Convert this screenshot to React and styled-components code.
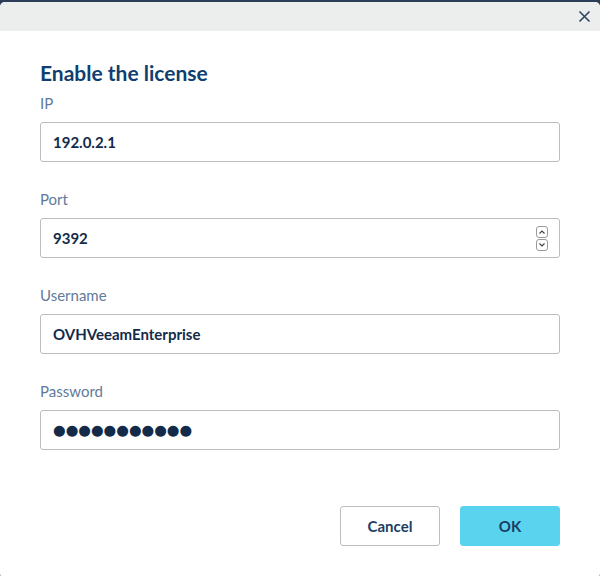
import React from 'react';
import styled, { createGlobalStyle } from 'styled-components';

const GlobalStyle = createGlobalStyle`
  html, body {
    margin: 0;
    padding: 0;
    background: linear-gradient(#2b3d58, #9aa3b4);
    overflow: hidden;
  }
  * { box-sizing: border-box; }
`;

const Dialog = styled.div`
  width: 600px;
  height: 576px;
  margin-top: 2px;
  background: #fff;
  border-radius: 5px;
  overflow: hidden;
  display: flex;
  flex-direction: column;
  font-family: Lato, 'Open Sans', sans-serif;
`;

const Header = styled.div`
  height: 29px;
  background: #eceeed;
  display: flex;
  justify-content: flex-end;
  align-items: center;
  padding-right: 9px;
`;

const CloseBtn = styled.button`
  border: 0;
  background: none;
  padding: 0;
  width: 14px;
  height: 14px;
  display: flex;
  align-items: center;
  justify-content: center;
  color: #2d4465;
`;

const Body = styled.div`
  flex: 1;
  padding: 30px 40px 0;
  display: flex;
  flex-direction: column;
`;

const Title = styled.h2`
  margin: 0 0 8px;
  font-size: 21px;
  line-height: 24px;
  font-weight: 700;
  color: #0f3f70;
`;

const Field = styled.div`
  display: flex;
  flex-direction: column;
  & + & {
    margin-top: 27px;
  }
`;

const Label = styled.label`
  font-size: 15px;
  line-height: 20px;
  color: #5f7a9b;
  margin-bottom: 9px;
`;

const Input = styled.div`
  height: 40px;
  border: 1px solid #bdbdbd;
  border-radius: 3px;
  display: flex;
  align-items: center;
  padding: 0 12px;
  font-size: 15px;
  font-weight: 700;
  color: #132b49;
`;

const Dots = styled.span`
  font-family: 'DejaVu Sans', sans-serif;
  font-size: 14.5px;
  color: #132b49;
`;

const Spinner = styled.div`
  margin-left: auto;
  margin-right: -1px;
  display: flex;
  flex-direction: column;
  gap: 1px;
`;

const SpinBox = styled.div`
  width: 12px;
  height: 12px;
  border: 1px solid #9a9a9a;
  border-radius: 3px;
  display: flex;
  align-items: center;
  justify-content: center;
`;

const Footer = styled.div`
  display: flex;
  justify-content: flex-end;
  gap: 20px;
  margin-top: 56px;
`;

const Button = styled.button`
  width: 100px;
  height: 40px;
  border-radius: 3px;
  font-family: Lato, 'Open Sans', sans-serif;
  font-size: 15px;
  font-weight: 700;
  color: #1c3d63;
  border: 1px solid ${(p) => (p.$primary ? '#5ad3ef' : '#bdbdbd')};
  background: ${(p) => (p.$primary ? '#5ad3ef' : '#fff')};
`;

const Chevron = ({ up }) => (
  <svg width="8" height="6" viewBox="0 0 8 6">
    <path
      d={up ? 'M1.5 4.5 L4 2 L6.5 4.5' : 'M1.5 1.5 L4 4 L6.5 1.5'}
      fill="none"
      stroke="#444"
      strokeWidth="1.2"
    />
  </svg>
);

export default function App() {
  return (
    <>
      <GlobalStyle />
      <Dialog>
        <Header>
          <CloseBtn aria-label="Close">
            <svg width="13" height="13" viewBox="0 0 13 13">
              <path d="M1.5 1.5 L11.5 11.5 M11.5 1.5 L1.5 11.5" stroke="currentColor" strokeWidth="1.6" />
            </svg>
          </CloseBtn>
        </Header>
        <Body>
          <Title>Enable the license</Title>
          <Field>
            <Label>IP</Label>
            <Input>192.0.2.1</Input>
          </Field>
          <Field>
            <Label>Port</Label>
            <Input>
              9392
              <Spinner>
                <SpinBox><Chevron up /></SpinBox>
                <SpinBox><Chevron /></SpinBox>
              </Spinner>
            </Input>
          </Field>
          <Field>
            <Label>Username</Label>
            <Input>OVHVeeamEnterprise</Input>
          </Field>
          <Field>
            <Label>Password</Label>
            <Input>
              <Dots>●●●●●●●●●●●</Dots>
            </Input>
          </Field>
          <Footer>
            <Button>Cancel</Button>
            <Button $primary>OK</Button>
          </Footer>
        </Body>
      </Dialog>
    </>
  );
}
